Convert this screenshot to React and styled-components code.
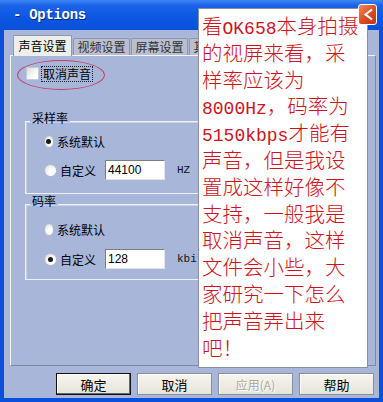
import React from "react";
import styled, { createGlobalStyle } from "styled-components";

const GlobalStyle = createGlobalStyle`
  html, body {
    margin: 0;
    padding: 0;
  }
  body {
    font-family: "Noto Sans CJK SC", "Liberation Sans", sans-serif;
    font-size: 12px;
    color: #000;
  }
`;

const BODY = "#a8b6da";
const FRAME = "#0a50da";

const noteLines = [
  "看OK658本身拍摄",
  "的视屏来看，采",
  "样率应该为",
  "8000Hz，码率为",
  "5150kbps才能有",
  "声音，但是我设",
  "置成这样好像不",
  "支持，一般我是",
  "取消声音，这样",
  "文件会小些，大",
  "家研究一下怎么",
  "把声音弄出来",
  "吧！",
];

const App = () => {
  // latin runs get the narrow half-width font, the rest stays CJK
  const renderLine = (text) =>
    text.split(/([\x20-\x7e]+)/).map((part, i) =>
      /^[\x20-\x7e]+$/.test(part) ? <Latin key={i}>{part}</Latin> : part
    );

  return (
    <Window>
      <GlobalStyle />
      <TitleBar>
        <TitleText>- Options</TitleText>
        <CloseButton>
          <svg width="13" height="13" viewBox="0 0 13 13">
            <path d="M11 1.5 L4.5 6.5 L11 11.5" stroke="#fff" strokeWidth="2.2" fill="none" />
          </svg>
        </CloseButton>
      </TitleBar>
      <Frame>
        <Tabs>
          <Tab $active>声音设置</Tab>
          <Tab>视频设置</Tab>
          <Tab>屏幕设置</Tab>
          <Tab>其他设置</Tab>
        </Tabs>
        <Panel>
          <CheckRow>
            <CheckBox />
            <FocusLabel>取消声音</FocusLabel>
          </CheckRow>
          <Ellipse />

          <Group $first $gap={9} $bottom={13}>
            <Legend>采样率</Legend>
            <OptionRow>
              <Option>
                <Radio $checked />
                系统默认
              </Option>
            </OptionRow>
            <OptionRow>
              <Option>
                <Radio />
                自定义
              </Option>
              <TextInput defaultValue="44100" />
              <Unit>HZ</Unit>
            </OptionRow>
          </Group>

          <Group $gap={10} $bottom={10}>
            <Legend>码率</Legend>
            <OptionRow>
              <Option>
                <Radio />
                系统默认
              </Option>
            </OptionRow>
            <OptionRow>
              <Option>
                <Radio $checked />
                自定义
              </Option>
              <TextInput defaultValue="128" />
              <Unit>kbit/s</Unit>
            </OptionRow>
          </Group>
        </Panel>
        <ButtonRow>
          <Button $default>确定</Button>
          <Button>取消</Button>
          <Button disabled>应用(A)</Button>
          <Button>帮助</Button>
        </ButtonRow>
      </Frame>

      <Note>
        {noteLines.map((line) => (
          <NoteLine key={line}>{renderLine(line)}</NoteLine>
        ))}
      </Note>
    </Window>
  );
};

export default App;

const Window = styled.div`
  position: relative;
  width: 383px;
  height: 402px;
  display: flex;
  flex-direction: column;
  overflow: hidden;
  background: ${BODY};
`;

const TitleBar = styled.div`
  height: 30px;
  flex: none;
  display: flex;
  align-items: center;
  justify-content: space-between;
  padding: 0 6px 0 13px;
  box-sizing: border-box;
  background: linear-gradient(#3d86f4 0%, #1a62e8 18%, #0c56e2 60%, #0a50d8 100%);
`;

const TitleText = styled.div`
  font-family: "Liberation Mono", monospace;
  font-weight: bold;
  font-size: 14px;
  color: #fff;
  text-shadow: 1px 1px 0 #0a2a80;
  letter-spacing: -0.3px;
`;

const CloseButton = styled.div`
  position: relative;
  z-index: 3;
  width: 19px;
  height: 21px;
  border: 1px solid #fff;
  border-radius: 3px;
  background: linear-gradient(135deg, #f08a5c, #d8461c 60%, #c03810);
  display: flex;
  align-items: center;
  justify-content: center;
  box-sizing: border-box;
  margin-top: -2px;
`;

const Frame = styled.div`
  flex: 1;
  display: flex;
  flex-direction: column;
  border: 4px solid ${FRAME};
  border-top: none;
  padding: 5px 3px 3px 6px;
  box-sizing: border-box;
`;

const Tabs = styled.div`
  height: 20px;
  display: flex;
  align-items: flex-end;
  gap: 1px;
  padding-left: 3px;
  position: relative;
  z-index: 1;
`;

const Tab = styled.div`
  width: ${(p) => (p.$active ? 59 : 57)}px;
  height: ${(p) => (p.$active ? 21 : 17)}px;
  margin-bottom: ${(p) => (p.$active ? -1 : 0)}px;
  box-sizing: border-box;
  border: 1px solid #8e97ac;
  border-bottom: none;
  border-radius: 2px 2px 0 0;
  background: ${(p) => (p.$active ? "#eeeeea" : "#b9bfcf")};
  color: ${(p) => (p.$active ? "#000" : "#333")};
  display: flex;
  align-items: center;
  justify-content: center;
  font-size: 12px;
  line-height: 12px;
`;

const Panel = styled.div`
  position: relative;
  height: 311px;
  box-sizing: border-box;
  border: 1px solid;
  border-color: #f4f4f2 #7e889e #7e889e #f4f4f2;
  padding: 10px 14px 0 14px;
  display: flex;
  flex-direction: column;
  align-items: stretch;
`;

const CheckRow = styled.div`
  display: flex;
  align-items: center;
  gap: 3px;
  height: 15px;
  padding-left: 1px;
`;

const CheckBox = styled.span`
  width: 11px;
  height: 11px;
  border: 1px solid #c4cad8;
  background: linear-gradient(135deg, #dcdcd6, #ffffff 70%);
`;

const FocusLabel = styled.span`
  outline: 1px dotted #222;
  padding: 0 1px;
  line-height: 14px;
`;

const Ellipse = styled.div`
  position: absolute;
  left: 6px;
  top: 4px;
  width: 88px;
  height: 30px;
  border: 1px solid #c83a64;
  border-radius: 50%;
  box-sizing: border-box;
`;

const Group = styled.fieldset`
  margin: 0;
  margin-top: ${(p) => (p.$first ? 31 : 1)}px;
  border: 1px solid #eef1f8;
  box-shadow: inset 1px 1px 0 #c8d0e4;
  padding: ${(p) => (p.$first ? 1 : 6)}px 0 ${(p) => p.$bottom}px 4px;
  display: flex;
  flex-direction: column;
  gap: ${(p) => p.$gap}px;
  min-width: 0;
`;

const Legend = styled.legend`
  padding: 0 2px 6px 2px;
  margin-left: 0;
  font-size: 12px;
  line-height: 12px;
`;

const OptionRow = styled.div`
  display: flex;
  align-items: center;
  height: 20px;
  padding-left: 14px;
`;

const Option = styled.label`
  width: 61px;
  display: flex;
  align-items: center;
  gap: 3px;
  white-space: nowrap;
  font-size: 12px;
`;

const Radio = styled.span`
  width: 13px;
  height: 13px;
  box-sizing: border-box;
  border-radius: 50%;
  border: 1px solid #b4bccc;
  background: radial-gradient(circle at 65% 65%, #ffffff 30%, #d6d6d0 100%);
  display: flex;
  align-items: center;
  justify-content: center;
  &::after {
    content: "";
    width: 5px;
    height: 5px;
    border-radius: 50%;
    background: ${(p) => (p.$checked ? "#1a1a1a" : "transparent")};
  }
`;

const TextInput = styled.input`
  width: 60px;
  height: 20px;
  box-sizing: border-box;
  border: 1px solid;
  border-color: #7c7c7c #e4e4e4 #e4e4e4 #7c7c7c;
  background: #fff;
  padding: 0 2px;
  font-family: "Liberation Sans", sans-serif;
  font-size: 12px;
  color: #000;
  outline: none;
`;

const Unit = styled.span`
  margin-left: 12px;
  font-family: "Liberation Mono", monospace;
  font-size: 11px;
  color: #111;
`;

const ButtonRow = styled.div`
  display: flex;
  justify-content: flex-end;
  gap: 6px;
  margin-top: 7px;
  padding-right: 2px;
`;

const Button = styled.button`
  width: 75px;
  height: 22px;
  box-sizing: border-box;
  border: 1px solid ${(p) => (p.$default ? "#111" : "#8a8e98")};
  border-radius: 0;
  box-shadow: ${(p) =>
    p.$default ? "inset -1px -1px 0 #6a6a6a, inset 1px 1px 0 #fff" : "inset 1px 1px 0 #fff"};
  background: linear-gradient(#f6f5f0, #e6e4da);
  font-family: "Noto Sans CJK SC", sans-serif;
  font-size: 13px;
  line-height: 13px;
  color: #000;
  padding: 0;
  &:disabled {
    color: #aca899;
    text-shadow: 1px 1px 0 #fff;
    font-size: 12px;
  }
`;

const Note = styled.div`
  position: absolute;
  z-index: 2;
  left: 198px;
  top: 8px;
  width: 170px;
  height: 360px;
  box-sizing: border-box;
  border: 1px solid #8a8f9c;
  background: #fff;
  padding: 3px 0 0 3px;
  color: #cc1420;
  font-family: "Noto Sans CJK SC", sans-serif;
  font-weight: 300;
  font-size: 20.5px;
`;

const NoteLine = styled.div`
  height: 26.8px;
  line-height: 26.8px;
  white-space: nowrap;
`;

const Latin = styled.span`
  font-family: "Liberation Mono", monospace;
  font-weight: 400;
  font-size: 18px;
`;
